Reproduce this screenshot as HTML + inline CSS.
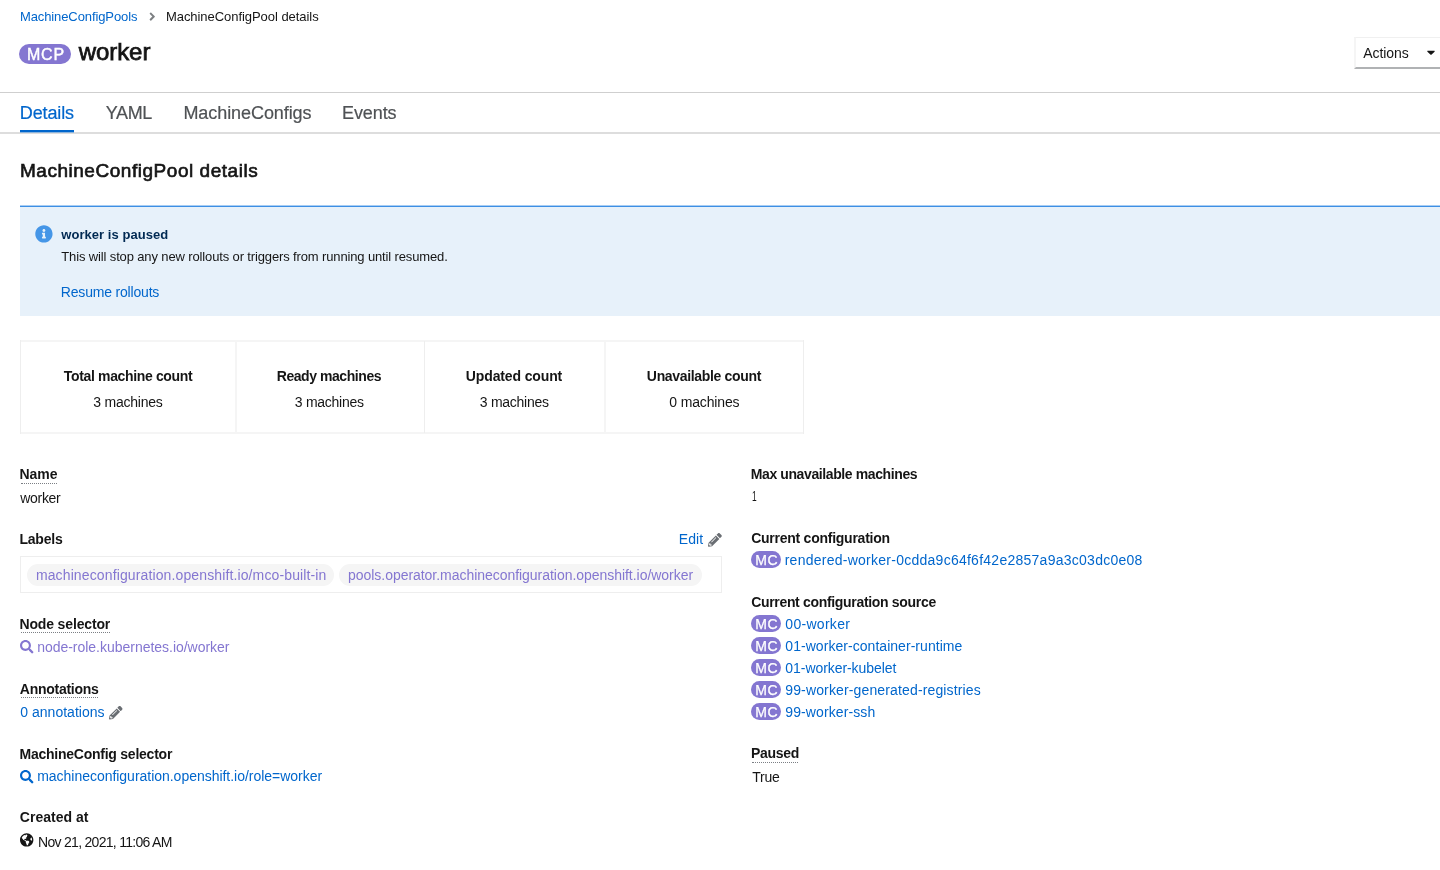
<!DOCTYPE html>
<html lang="en">
<head>
<meta charset="utf-8">
<title>worker · MachineConfigPool details</title>
<style>
html,body{margin:0;padding:0;background:#fff;}
body{width:1440px;height:870px;position:relative;overflow:hidden;font-family:"Liberation Sans",sans-serif;color:#151515;}
#page{position:absolute;left:0;top:0;width:1440px;height:870px;will-change:transform;}
.t{position:absolute;white-space:nowrap;display:block;}
.b{position:absolute;box-sizing:border-box;}
svg{position:absolute;overflow:visible;}
.mc{background:#8476d1;border-radius:10px;left:751px;width:29.8px;height:17.3px;}
.dot{height:0;border-top:1px dotted #7b7f84;}
</style>
</head>
<body>
<div id="page">
<!-- header lines -->
<div class="b" style="left:-10px;top:92px;width:1470px;height:1px;background:#cfcfcf"></div>
<div class="b" style="left:-10px;top:132px;width:1470px;height:2px;background:#dddddd"></div>
<div class="b" style="left:20px;top:130px;width:53.5px;height:2px;background:#0066cc"></div>
<div class="b" style="left:20px;top:132px;width:53.5px;height:1px;background:#8bb4dd"></div>
<!-- breadcrumb chevron -->
<svg style="left:148.6px;top:9.8px" width="6.6" height="13.2" viewBox="0 0 256 512"><path fill="#7d8083" d="M224.3 273l-136 136c-9.400 9.400-24.600 9.400-33.900 0l-22.600-22.600c-9.400-9.400-9.400-24.600 0-33.900l96.400-96.400-96.400-96.400c-9.400-9.400-9.400-24.600 0-33.900L54.300 103c9.400-9.400 24.600-9.400 33.900 0l136 136c9.500 9.400 9.500 24.600.1 34z"/></svg>
<!-- MCP badge -->
<div class="b" style="left:19.3px;top:44.2px;width:51.7px;height:19.4px;border-radius:10px;background:#8476d1"></div>
<!-- Actions button -->
<div class="b" style="left:1354px;top:37px;width:100px;height:32px;background:#fff;border:1px solid #f0f0f0;border-left:2px solid #f5f5f5;border-bottom:2px solid #b0b2b4"></div>
<svg style="left:1426.8px;top:45.9px" width="8" height="12.8" viewBox="0 0 320 512"><path fill="#151515" d="M31.3 192h257.300c17.800 0 26.700 21.500 14.100 34.100L174.100 354.800c-7.800 7.800-20.500 7.800-28.300 0L17.200 226.100C4.600 213.500 13.500 192 31.300 192z"/></svg>
<!-- alert -->
<div class="b" style="left:20px;top:205px;width:1440px;height:1px;background:#a8cdf3"></div>
<div class="b" style="left:20px;top:206px;width:1440px;height:1px;background:#3d8fe4"></div>
<div class="b" style="left:20px;top:207px;width:1440px;height:109px;background:#e7f1fa"></div>
<svg style="left:35.200px;top:224.500px" width="17.850" height="17.850" viewBox="0 0 512 512"><path fill="#4596e7" d="M256 8C119.043 8 8 119.083 8 256c0 136.997 111.043 248 248 248s248-111.003 248-248C504 119.083 392.957 8 256 8zm0 110c23.196 0 42 18.804 42 42s-18.804 42-42 42-42-18.804-42-42 18.804-42 42-42zm56 254c0 6.627-5.373 12-12 12h-88c-6.627 0-12-5.373-12-12v-24c0-6.627 5.373-12 12-12h12v-64h-12c-6.627 0-12-5.373-12-12v-24c0-6.627 5.373-12 12-12h64c6.627 0 12 5.373 12 12v100h12c6.627 0 12 5.373 12 12v24z"/></svg>
<!-- count cards -->
<div class="b" style="left:20px;top:340px;width:784px;height:2px;background:#f5f5f5"></div>
<div class="b" style="left:20px;top:432px;width:784px;height:2px;background:#f5f5f5"></div>
<div class="b" style="left:20px;top:340px;width:1px;height:94px;background:#eeeeee"></div>
<div class="b" style="left:803px;top:340px;width:1px;height:94px;background:#eeeeee"></div>
<div class="b" style="left:235px;top:341px;width:2px;height:92px;background:#f5f5f5"></div>
<div class="b" style="left:424px;top:341px;width:1px;height:92px;background:#eeeeee"></div>
<div class="b" style="left:604px;top:341px;width:2px;height:92px;background:#f5f5f5"></div>
<!-- dotted underlines -->
<div class="b dot" style="left:20.5px;top:483px;width:36px"></div>
<div class="b dot" style="left:20.5px;top:632px;width:89px"></div>
<div class="b dot" style="left:20.5px;top:697px;width:77px"></div>
<div class="b dot" style="left:752px;top:762px;width:46px"></div>
<!-- labels box -->
<div class="b" style="left:20px;top:556px;width:702px;height:37px;border:1px solid #eeeeee"></div>
<div class="b" style="left:27px;top:564px;width:307.300px;height:21.600px;border-radius:11px;background:#f5f5f5"></div>
<div class="b" style="left:338.500px;top:564px;width:363.500px;height:21.600px;border-radius:11px;background:#f5f5f5"></div>
<!-- pencil icons -->
<svg style="left:708px;top:532.800px" width="13.800" height="13.800" viewBox="0 0 512 512"><path fill="#6a6e73" d="M497.900 142.100l-46.100 46.100c-4.700 4.700-12.300 4.700-17 0l-111-111c-4.700-4.700-4.700-12.300 0-17l46.100-46.100c18.700-18.700 49.100-18.700 67.900 0l60.100 60.100c18.800 18.700 18.800 49.100 0 67.900zM284.200 99.800L21.600 362.400.4 483.900c-2.900 16.400 11.400 30.600 27.800 27.800l121.500-21.300 262.600-262.600c4.700-4.700 4.700-12.300 0-17l-111-111c-4.800-4.700-12.400-4.700-17.100 0zM124.100 339.900c-5.500-5.500-5.500-14.300 0-19.800l154-154c5.500-5.500 14.300-5.500 19.800 0s5.500 14.300 0 19.800l-154 154c-5.500 5.500-14.300 5.500-19.800 0zM88 424h48v36.300l-64.500 11.300-31.100-31.100L51.700 376H88v48z"/></svg>
<svg style="left:109px;top:706px" width="13.500" height="13.500" viewBox="0 0 512 512"><path fill="#6a6e73" d="M497.900 142.100l-46.100 46.100c-4.700 4.700-12.300 4.700-17 0l-111-111c-4.700-4.700-4.700-12.300 0-17l46.100-46.100c18.700-18.700 49.100-18.700 67.900 0l60.100 60.100c18.800 18.700 18.800 49.100 0 67.900zM284.200 99.800L21.600 362.400.4 483.900c-2.900 16.400 11.400 30.600 27.800 27.800l121.500-21.300 262.600-262.600c4.700-4.700 4.700-12.300 0-17l-111-111c-4.800-4.700-12.400-4.700-17.100 0zM124.100 339.900c-5.500-5.500-5.500-14.300 0-19.800l154-154c5.500-5.500 14.300-5.500 19.800 0s5.500 14.300 0 19.800l-154 154c-5.500 5.500-14.300 5.500-19.800 0zM88 424h48v36.300l-64.500 11.300-31.100-31.100L51.700 376H88v48z"/></svg>
<!-- search icons -->
<svg style="left:19.6px;top:639.5px" width="13.5" height="13.5" viewBox="0 0 512 512"><path fill="#8476d1" d="M505 442.700L405.300 343c-4.500-4.500-10.600-7-17-7H372c27.600-35.300 44-79.700 44-128C416 93.100 322.900 0 208 0S0 93.100 0 208s93.100 208 208 208c48.300 0 92.700-16.400 128-44v16.300c0 6.400 2.500 12.500 7 17l99.700 99.700c9.400 9.400 24.600 9.400 33.900 0l28.300-28.300c9.400-9.400 9.400-24.600.1-34zM208 336c-70.700 0-128-57.200-128-128 0-70.700 57.200-128 128-128 70.700 0 128 57.200 128 128 0 70.700-57.200 128-128 128z"/></svg>
<svg style="left:19.5px;top:769.7px" width="13.5" height="13.5" viewBox="0 0 512 512"><path fill="#0066cc" d="M505 442.700L405.300 343c-4.500-4.500-10.600-7-17-7H372c27.600-35.300 44-79.700 44-128C416 93.100 322.900 0 208 0S0 93.100 0 208s93.100 208 208 208c48.300 0 92.700-16.400 128-44v16.300c0 6.400 2.500 12.500 7 17l99.700 99.700c9.400 9.400 24.600 9.400 33.900 0l28.300-28.300c9.400-9.400 9.400-24.600.1-34zM208 336c-70.700 0-128-57.200-128-128 0-70.700 57.200-128 128-128 70.700 0 128 57.200 128 128 0 70.700-57.200 128-128 128z"/></svg>
<!-- globe icon -->
<svg style="left:19.8px;top:833px" width="13.4" height="13.83" viewBox="0 0 496 512"><path fill="#151515" d="M248 8C111.030 8 0 119.030 0 256s111.030 248 248 248 248-111.030 248-248S384.970 8 248 8zm82.290 357.600c-3.900 3.880-7.990 7.950-11.310 11.280-2.990 3-5.100 6.700-6.170 10.710-1.510 5.660-2.730 11.380-4.770 16.870l-17.390 46.850c-13.760 3-28 4.690-42.650 4.690v-27.380c1.690-12.620-7.640-36.260-22.630-51.250-6-6-9.370-14.140-9.370-22.630v-32.010c0-11.640-6.270-22.340-16.460-27.970-14.370-7.950-34.810-19.060-48.810-26.110-11.480-5.780-22.100-13.140-31.650-21.750l-.8-.72a114.792 114.792 0 0 1-18.060-20.740c-9.380-13.770-24.660-36.420-34.590-51.140 20.470-45.500 57.360-82.040 103.200-101.890l24.010 12.010C203.480 89.740 216 82.010 216 70.110v-11.300c7.990-1.290 16.120-2.110 24.390-2.420l28.300 28.300c6.250 6.250 6.250 16.380 0 22.630L264 112l-10.340 10.340c-3.120 3.120-3.120 8.190 0 11.310l4.690 4.690c3.120 3.120 3.120 8.190 0 11.310l-8 8a8.008 8.008 0 0 1-5.660 2.340h-8.990c-2.080 0-4.080.81-5.580 2.270l-9.920 9.650a8.008 8.008 0 0 0-1.580 9.310l15.590 31.190c2.660 5.320-1.210 11.580-7.150 11.580h-5.640c-1.930 0-3.790-.7-5.240-1.960l-9.280-8.060a16.017 16.017 0 0 0-15.550-3.100l-31.170 10.390a11.950 11.950 0 0 0-8.170 11.340c0 4.530 2.560 8.660 6.610 10.690l11.080 5.540c9.410 4.710 19.790 7.160 30.310 7.160s22.590 27.290 32 32h66.750c8.490 0 16.620 3.370 22.630 9.370l13.690 13.690a30.503 30.503 0 0 1 8.930 21.570 46.536 46.536 0 0 1-13.720 32.980zM417 274.250c-5.790-1.450-10.840-5-14.150-9.970l-17.980-26.970a23.970 23.970 0 0 1 0-26.620l19.590-29.380c2.320-3.470 5.500-6.290 9.240-8.150l12.980-6.490C440.200 193.590 448 223.870 448 256c0 8.670-.74 17.160-1.820 25.540L417 274.250z"/></svg>
<!-- MC badges -->
<div class="b mc" style="top:550.9px"></div>
<div class="b mc" style="top:614.8px"></div>
<div class="b mc" style="top:636.9px"></div>
<div class="b mc" style="top:658.95px"></div>
<div class="b mc" style="top:681.0px"></div>
<div class="b mc" style="top:703.05px"></div>
<!-- text -->
<span id="bc1" class="t" style="left:19.95px;top:7.00px;font-size:13px;line-height:19px;font-weight:400;color:#0066cc;letter-spacing:-0.100px;">MachineConfigPools</span>
<span id="bc2" class="t" style="left:165.95px;top:7.00px;font-size:13px;line-height:19px;font-weight:400;color:#151515;letter-spacing:-0.050px;">MachineConfigPool details</span>
<span id="mcp" class="t" style="left:26.92px;top:44.00px;font-size:16px;line-height:21px;font-weight:400;color:#ffffff;letter-spacing:0.824px;-webkit-text-stroke:0.4px #fff">MCP</span>
<span id="title" class="t" style="left:78.74px;top:36.00px;font-size:24px;line-height:31px;font-weight:400;color:#151515;letter-spacing:-0.075px;-webkit-text-stroke:0.75px #151515">worker</span>
<span id="act" class="t" style="left:1363.30px;top:43.00px;font-size:14px;line-height:20px;font-weight:400;color:#151515;letter-spacing:-0.096px;">Actions</span>
<span id="tab1" class="t" style="left:19.83px;top:101.00px;font-size:18px;line-height:24px;font-weight:400;color:#0066cc;letter-spacing:-0.126px;-webkit-text-stroke:0.2px #0066cc">Details</span>
<span id="tab2" class="t" style="left:105.71px;top:101.00px;font-size:18px;line-height:24px;font-weight:400;color:#4f5255;letter-spacing:-0.357px;-webkit-text-stroke:0.2px #4f5255">YAML</span>
<span id="tab3" class="t" style="left:183.46px;top:101.00px;font-size:18px;line-height:24px;font-weight:400;color:#4f5255;letter-spacing:-0.074px;-webkit-text-stroke:0.2px #4f5255">MachineConfigs</span>
<span id="tab4" class="t" style="left:342.05px;top:101.00px;font-size:18px;line-height:24px;font-weight:400;color:#4f5255;letter-spacing:-0.110px;-webkit-text-stroke:0.2px #4f5255">Events</span>
<span id="h2" class="t" style="left:19.93px;top:158.00px;font-size:19px;line-height:25px;font-weight:400;color:#151515;letter-spacing:0.533px;-webkit-text-stroke:0.65px #151515">MachineConfigPool details</span>
<span id="al1" class="t" style="left:61.30px;top:225.00px;font-size:13px;line-height:19px;font-weight:700;color:#002952;letter-spacing:0.043px;">worker is paused</span>
<span id="al2" class="t" style="left:61.28px;top:247.00px;font-size:13px;line-height:19px;font-weight:400;color:#151515;letter-spacing:-0.134px;">This will stop any new rollouts or triggers from running until resumed.</span>
<span id="al3" class="t" style="left:60.84px;top:282.00px;font-size:14px;line-height:20px;font-weight:400;color:#0066cc;letter-spacing:-0.189px;">Resume rollouts</span>
<span id="c1a" class="t" style="left:63.84px;top:366.00px;font-size:14px;line-height:20px;font-weight:700;color:#151515;letter-spacing:-0.349px;">Total machine count</span>
<span id="c1b" class="t" style="left:93.33px;top:392.00px;font-size:14px;line-height:20px;font-weight:400;color:#151515;letter-spacing:-0.240px;">3 machines</span>
<span id="c2a" class="t" style="left:276.74px;top:366.00px;font-size:14px;line-height:20px;font-weight:700;color:#151515;letter-spacing:-0.439px;">Ready machines</span>
<span id="c2b" class="t" style="left:294.71px;top:392.00px;font-size:14px;line-height:20px;font-weight:400;color:#151515;letter-spacing:-0.251px;">3 machines</span>
<span id="c3a" class="t" style="left:465.84px;top:366.00px;font-size:14px;line-height:20px;font-weight:700;color:#151515;letter-spacing:-0.133px;">Updated count</span>
<span id="c3b" class="t" style="left:479.71px;top:392.00px;font-size:14px;line-height:20px;font-weight:400;color:#151515;letter-spacing:-0.251px;">3 machines</span>
<span id="c4a" class="t" style="left:646.86px;top:366.00px;font-size:14px;line-height:20px;font-weight:700;color:#151515;letter-spacing:-0.331px;">Unavailable count</span>
<span id="c4b" class="t" style="left:669.34px;top:392.00px;font-size:14px;line-height:20px;font-weight:400;color:#151515;letter-spacing:-0.153px;">0 machines</span>
<span id="l1" class="t" style="left:19.47px;top:464.00px;font-size:14px;line-height:20px;font-weight:700;color:#151515;letter-spacing:-0.042px;">Name</span>
<span id="v1" class="t" style="left:20.28px;top:488.00px;font-size:14px;line-height:20px;font-weight:400;color:#151515;letter-spacing:-0.300px;">worker</span>
<span id="l2" class="t" style="left:19.47px;top:529.00px;font-size:14px;line-height:20px;font-weight:700;color:#151515;letter-spacing:-0.231px;">Labels</span>
<span id="edit" class="t" style="left:678.84px;top:529.00px;font-size:14px;line-height:20px;font-weight:400;color:#0066cc;letter-spacing:0.050px;">Edit</span>
<span id="chip1" class="t" style="left:35.90px;top:565.00px;font-size:14px;line-height:20px;font-weight:400;color:#8476d1;letter-spacing:0.125px;">machineconfiguration.openshift.io/mco-built-in</span>
<span id="chip2" class="t" style="left:348.03px;top:565.00px;font-size:14px;line-height:20px;font-weight:400;color:#8476d1;letter-spacing:-0.038px;">pools.operator.machineconfiguration.openshift.io/worker</span>
<span id="l3" class="t" style="left:19.47px;top:614.00px;font-size:14px;line-height:20px;font-weight:700;color:#151515;letter-spacing:-0.148px;">Node selector</span>
<span id="v3" class="t" style="left:37.16px;top:637.00px;font-size:14px;line-height:20px;font-weight:400;color:#8476d1;letter-spacing:-0.022px;">node-role.kubernetes.io/worker</span>
<span id="l4" class="t" style="left:19.85px;top:679.00px;font-size:14px;line-height:20px;font-weight:700;color:#151515;letter-spacing:-0.278px;">Annotations</span>
<span id="v4" class="t" style="left:20.34px;top:702.00px;font-size:14px;line-height:20px;font-weight:400;color:#0066cc;letter-spacing:0.009px;">0 annotations</span>
<span id="l5" class="t" style="left:19.47px;top:744.00px;font-size:14px;line-height:20px;font-weight:700;color:#151515;letter-spacing:-0.241px;">MachineConfig selector</span>
<span id="v5" class="t" style="left:37.16px;top:766.00px;font-size:14px;line-height:20px;font-weight:400;color:#0066cc;letter-spacing:-0.024px;">machineconfiguration.openshift.io/role=worker</span>
<span id="l6" class="t" style="left:19.87px;top:807.00px;font-size:14px;line-height:20px;font-weight:700;color:#151515;letter-spacing:0.003px;">Created at</span>
<span id="v6" class="t" style="left:38.06px;top:832.00px;font-size:14px;line-height:20px;font-weight:400;color:#151515;letter-spacing:-0.708px;">Nov 21, 2021, 11:06 AM</span>
<span id="r1" class="t" style="left:750.74px;top:464.00px;font-size:14px;line-height:20px;font-weight:700;color:#151515;letter-spacing:-0.390px;">Max unavailable machines</span>
<span id="rv1" class="t" style="left:752.44px;top:486.00px;font-size:14px;line-height:20px;font-weight:400;color:#151515;letter-spacing:0.000px;transform:scaleX(0.6);transform-origin:0 0">1</span>
<span id="r2" class="t" style="left:751.15px;top:528.00px;font-size:14px;line-height:20px;font-weight:700;color:#151515;letter-spacing:-0.249px;">Current configuration</span>
<span id="rv2" class="t" style="left:784.68px;top:550.00px;font-size:14px;line-height:20px;font-weight:400;color:#0066cc;letter-spacing:0.257px;">rendered-worker-0cdda9c64f6f42e2857a9a3c03dc0e08</span>
<span id="r3" class="t" style="left:751.15px;top:592.00px;font-size:14px;line-height:20px;font-weight:700;color:#151515;letter-spacing:-0.320px;">Current configuration source</span>
<span id="s1" class="t" style="left:785.37px;top:614.00px;font-size:14px;line-height:20px;font-weight:400;color:#0066cc;letter-spacing:0.282px;">00-worker</span>
<span id="s2" class="t" style="left:785.37px;top:636.00px;font-size:14px;line-height:20px;font-weight:400;color:#0066cc;letter-spacing:0.042px;">01-worker-container-runtime</span>
<span id="s3" class="t" style="left:785.37px;top:658.00px;font-size:14px;line-height:20px;font-weight:400;color:#0066cc;letter-spacing:-0.064px;">01-worker-kubelet</span>
<span id="s4" class="t" style="left:785.26px;top:680.00px;font-size:14px;line-height:20px;font-weight:400;color:#0066cc;letter-spacing:0.142px;">99-worker-generated-registries</span>
<span id="s5" class="t" style="left:785.26px;top:702.00px;font-size:14px;line-height:20px;font-weight:400;color:#0066cc;letter-spacing:0.106px;">99-worker-ssh</span>
<span id="r4" class="t" style="left:751.00px;top:743.00px;font-size:14px;line-height:20px;font-weight:700;color:#151515;letter-spacing:-0.285px;">Paused</span>
<span id="rv4" class="t" style="left:752.22px;top:767.00px;font-size:14px;line-height:20px;font-weight:400;color:#151515;letter-spacing:-0.241px;">True</span>
<span id="mc0" class="t" style="left:755.35px;top:550.00px;font-size:14px;line-height:20px;font-weight:400;color:#ffffff;letter-spacing:0.569px;-webkit-text-stroke:0.25px #fff">MC</span>
<span id="mc1" class="t" style="left:755.35px;top:614.00px;font-size:14px;line-height:20px;font-weight:400;color:#ffffff;letter-spacing:0.569px;-webkit-text-stroke:0.25px #fff">MC</span>
<span id="mc2" class="t" style="left:755.35px;top:636.00px;font-size:14px;line-height:20px;font-weight:400;color:#ffffff;letter-spacing:0.569px;-webkit-text-stroke:0.25px #fff">MC</span>
<span id="mc3" class="t" style="left:755.35px;top:658.00px;font-size:14px;line-height:20px;font-weight:400;color:#ffffff;letter-spacing:0.569px;-webkit-text-stroke:0.25px #fff">MC</span>
<span id="mc4" class="t" style="left:755.35px;top:680.00px;font-size:14px;line-height:20px;font-weight:400;color:#ffffff;letter-spacing:0.569px;-webkit-text-stroke:0.25px #fff">MC</span>
<span id="mc5" class="t" style="left:755.35px;top:702.00px;font-size:14px;line-height:20px;font-weight:400;color:#ffffff;letter-spacing:0.569px;-webkit-text-stroke:0.25px #fff">MC</span>
</div>
</body>
</html>
